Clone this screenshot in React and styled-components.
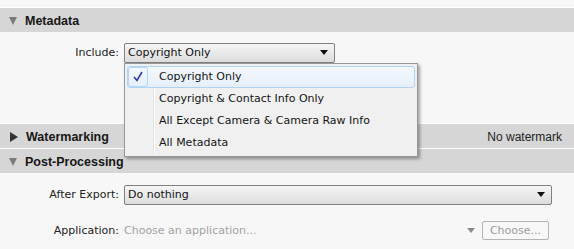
import styled, { createGlobalStyle } from 'styled-components'

const Global = createGlobalStyle`
  body {
    margin: 0;
    background: #f7f7f7;
    font-family: "DejaVu Sans", Verdana, sans-serif;
    font-size: 11px;
    color: #1c1c1c;
  }
`

const Page = styled.div`
  padding-top: 7px;
  width: 574px;
  height: 249px;
  overflow: hidden;
`

const Header = styled.div`
  height: 23px;
  border-top: 1px solid #fdfdfd;
  background: #d6d6d6;
  display: flex;
  align-items: center;
  padding: 1px 12px 0 9px;
`

const Arrow = styled.span`
  width: 0;
  height: 0;
  margin-right: 8px;
  ${(p) =>
    p.open
      ? `border-left: 4px solid transparent;
         border-right: 4px solid transparent;
         border-top: 8px solid #7b7b7b;`
      : `border-top: 5px solid transparent;
         border-bottom: 5px solid transparent;
         border-left: 8px solid #333;
         margin-left: 1px;`}
`

const Title = styled.span`
  font-family: "Liberation Sans", Arial, sans-serif;
  font-size: 12.5px;
  font-weight: bold;
  color: #161616;
  flex: 1;
`

const Summary = styled.span`
  font-family: "Liberation Sans", Arial, sans-serif;
  font-size: 12px;
  color: #222;
`

const Body = styled.div`
  height: ${(p) => p.h}px;
  padding-top: ${(p) => p.top}px;
  box-sizing: border-box;
  display: flex;
  flex-direction: column;
  gap: ${(p) => p.gap || 0}px;
`

const Row = styled.div`
  display: flex;
  align-items: center;
  height: ${(p) => p.h || 21}px;
  padding-right: ${(p) => p.right || 0}px;
`

const Label = styled.div`
  width: 119px;
  text-align: right;
  padding-right: 5px;
  color: #222;
`

const SelectWrap = styled.div`
  position: relative;
  width: ${(p) => p.w}px;
`

const Select = styled.div`
  height: 20px;
  box-sizing: border-box;
  border: 1px solid #808080;
  border-radius: 2px;
  background: linear-gradient(#f6f6f6, #dcdcdc);
  display: flex;
  align-items: center;
  padding: 0 6px 0 3px;
  color: #111;
`

const SelectText = styled.span`
  flex: 1;
`

const Caret = styled.span`
  width: 0;
  height: 0;
  border-left: 4px solid transparent;
  border-right: 4px solid transparent;
  border-top: 5px solid ${(p) => p.color || '#111'};
`

const Menu = styled.div`
  position: absolute;
  left: 0;
  top: 20px;
  width: 294px;
  box-sizing: border-box;
  background: #f0f0f0;
  border: 1px solid #979797;
  box-shadow: 2px 2px 3px rgba(0, 0, 0, 0.35);
  padding: 2px 2px 2px;
  z-index: 5;
`

const Gutter = styled.div`
  position: absolute;
  left: 28px;
  top: 2px;
  bottom: 2px;
  border-left: 1px solid #e2e3e3;
  border-right: 1px solid #ffffff;
`

const Item = styled.div`
  position: relative;
  height: 22px;
  display: flex;
  align-items: center;
  box-sizing: border-box;
  border: 1px solid ${(p) => (p.active ? '#aed4f6' : 'transparent')};
  border-radius: 3px;
  background: ${(p) => (p.active ? 'linear-gradient(#f4f8fd, #e5eefa)' : 'transparent')};
  color: #141414;
`

const CheckCell = styled.div`
  width: 20px;
  height: 20px;
  margin-right: 11px;
  box-sizing: border-box;
  border: 1px solid ${(p) => (p.active ? '#b8d6f4' : 'transparent')};
  border-radius: 3px;
  display: flex;
  align-items: center;
  justify-content: center;
`

const Field = styled.span`
  flex: 1;
  color: #a3a3a3;
`

const Choose = styled.div`
  margin-left: 7px;
  width: 67px;
  height: 19px;
  box-sizing: border-box;
  border: 1px solid #b5b5b5;
  border-radius: 2px;
  background: #f8f8f8;
  color: #9c9c9c;
  display: flex;
  align-items: center;
  justify-content: center;
`

const Check = () => (
  <svg width="10" height="11" viewBox="0 0 10 11">
    <path d="M1 6 L4 9.5 L9 1" fill="none" stroke="#2a3aa6" strokeWidth="1.6" />
  </svg>
)

const options = [
  'Copyright Only',
  'Copyright & Contact Info Only',
  'All Except Camera & Camera Raw Info',
  'All Metadata',
]

const App = () => (
  <Page>
    <Global />
    <Header>
      <Arrow open />
      <Title>Metadata</Title>
    </Header>
    <Body h={91} top={10}>
      <Row>
        <Label>Include:</Label>
        <SelectWrap w={211}>
          <Select>
            <SelectText>Copyright Only</SelectText>
            <Caret />
          </Select>
          <Menu>
            <Gutter />
            {options.map((o, i) => (
              <Item key={o} active={i === 0}>
                <CheckCell active={i === 0}>{i === 0 && <Check />}</CheckCell>
                {o}
              </Item>
            ))}
          </Menu>
        </SelectWrap>
      </Row>
    </Body>
    <Header>
      <Arrow />
      <Title>Watermarking</Title>
      <Summary>No watermark</Summary>
    </Header>
    <Header>
      <Arrow open />
      <Title>Post-Processing</Title>
    </Header>
    <Body h={76} top={11} gap={15}>
      <Row>
        <Label>After Export:</Label>
        <SelectWrap w={428}>
          <Select>
            <SelectText>Do nothing</SelectText>
            <Caret />
          </Select>
        </SelectWrap>
      </Row>
      <Row right={25}>
        <Label>Application:</Label>
        <Field>Choose an application...</Field>
        <Caret color="#8a8a8a" />
        <Choose>Choose...</Choose>
      </Row>
    </Body>
  </Page>
)

export default App
